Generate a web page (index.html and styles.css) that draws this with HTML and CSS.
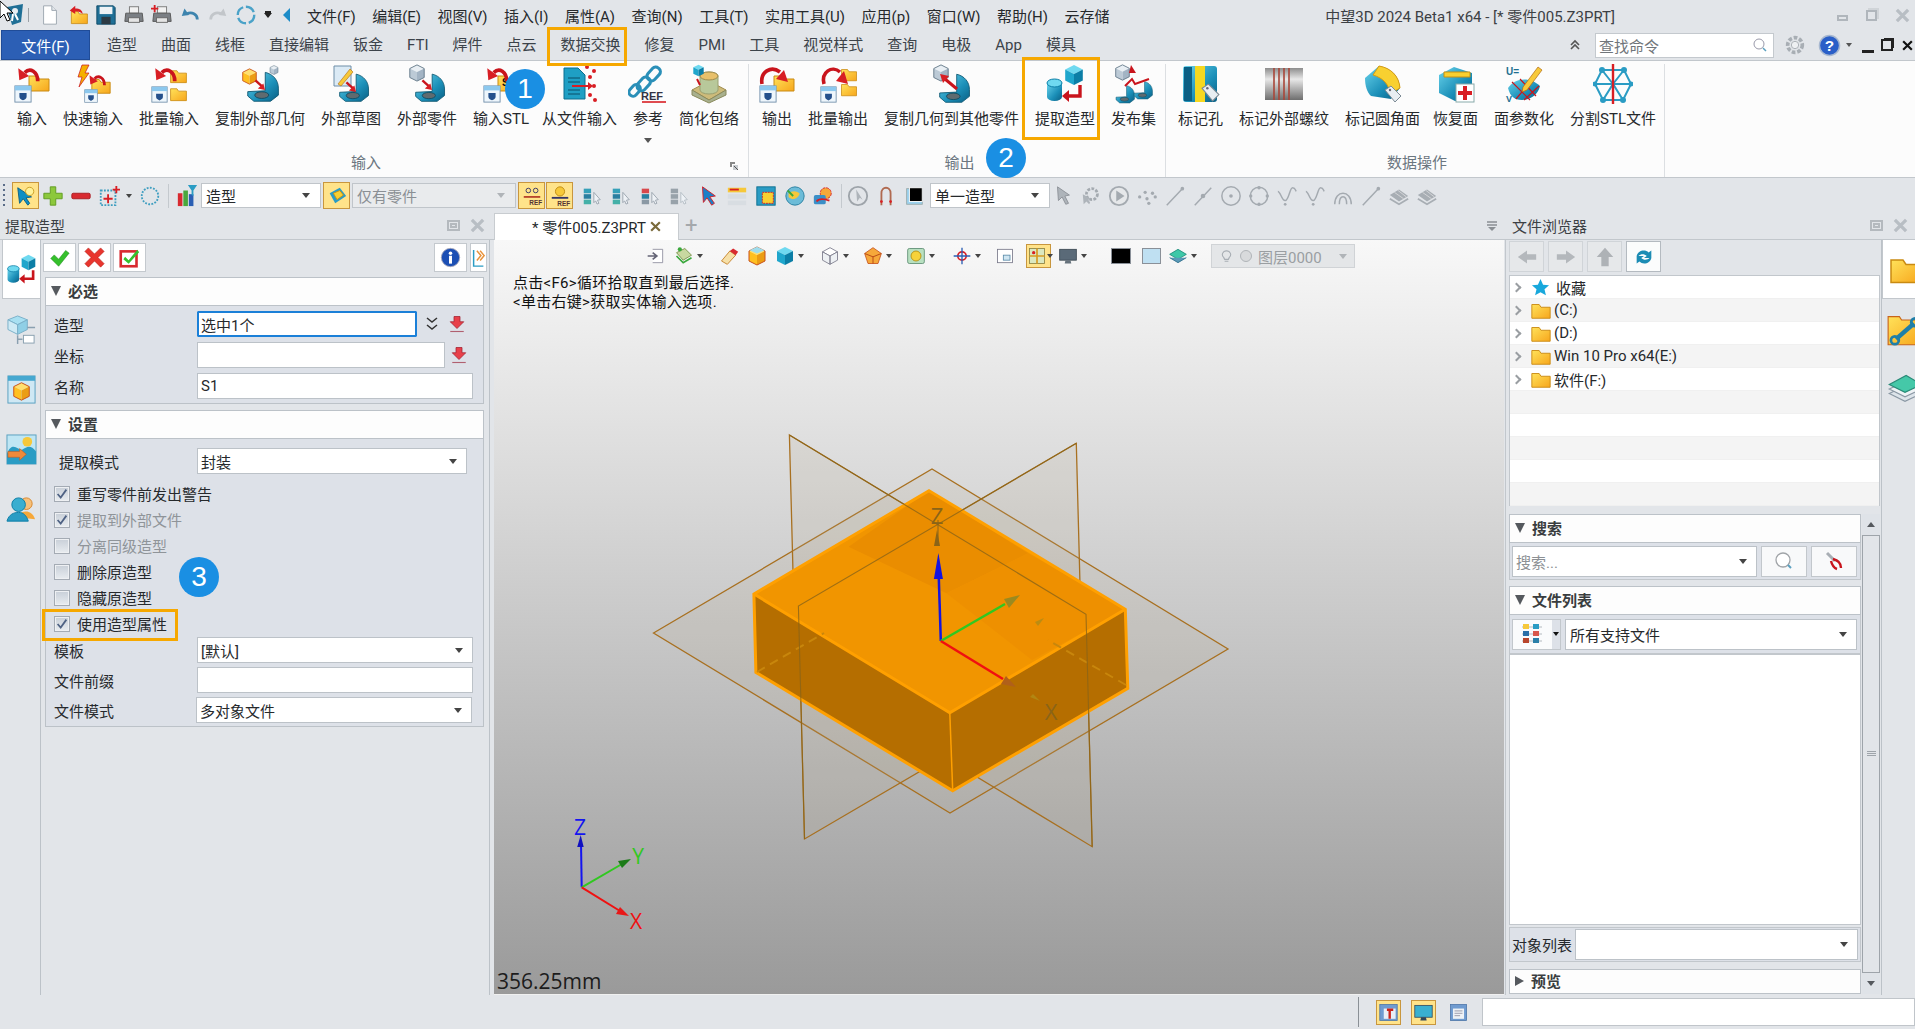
FILE: index.html
```html
<!DOCTYPE html>
<html lang="zh-CN">
<head>
  <meta charset="UTF-8" />
  <title>中望3D 2024 Beta1 x64</title>
  <link rel="stylesheet" href="styles.css">
</head>
<body>
<svg class="sprites" xmlns="http://www.w3.org/2000/svg">
  <defs>
    <linearGradient id="gFolder" x1="0" y1="0" x2="1" y2="1"><stop offset="0" stop-color="#ffe25a"/><stop offset="1" stop-color="#f7a61c"/></linearGradient>
    <linearGradient id="gTeal" x1="0" y1="0" x2="1" y2="1"><stop offset="0" stop-color="#6ad4ec"/><stop offset=".6" stop-color="#1b8fb8"/><stop offset="1" stop-color="#0a5f84"/></linearGradient>
    <linearGradient id="gMetal" x1="0" y1="0" x2="0" y2="1"><stop offset="0" stop-color="#8d8d8d"/><stop offset=".35" stop-color="#e8e8e8"/><stop offset="1" stop-color="#6e6e6e"/></linearGradient>

    <symbol id="i-folder" viewBox="0 0 24 24"><path d="M2 6h8l2 3h10v12H2z" fill="url(#gFolder)" stroke="#c98a12"/></symbol>
    <symbol id="i-win" viewBox="0 0 20 20"><rect x="1" y="1" width="18" height="18" fill="#eef6fc" stroke="#6f8ea8"/><rect x="1" y="1" width="18" height="5" fill="#8cc8ee"/><path d="M6 9h8v4c0 2-2 3-4 4-2-1-4-2-4-4z" fill="#24508c"/></symbol>
    <symbol id="i-curl" viewBox="0 0 24 24"><path d="M21 16C21 7 14 3 9 8" fill="none" stroke="#c9141c" stroke-width="3.4"/><path d="M3 4l1 11 9-4z" fill="#d81e24"/></symbol>
    <symbol id="i-part" viewBox="0 0 40 40"><path d="M22 5c9 2 15 9 15 18v8l-9 7H9l-7-6v-5l20-1z" fill="url(#gTeal)" stroke="#0b5570"/><ellipse cx="18" cy="31" rx="8" ry="3.8" fill="#5f6b70" stroke="#0b4a62"/></symbol>
    <symbol id="i-cubeg" viewBox="0 0 20 20"><path d="M10 1l8 4-8 4-8-4z" fill="#e9eff4"/><path d="M2 5l8 4v10l-8-4z" fill="#bccad6"/><path d="M18 5l-8 4v10l8-4z" fill="#a3b4c4"/><path d="M10 1l8 4v10l-8 4-8-4V5z" fill="none" stroke="#5f7484"/></symbol>
    <symbol id="i-cubet" viewBox="0 0 20 20"><path d="M10 1l8 4-8 4-8-4z" fill="#6fd9f0"/><path d="M2 5l8 4v10l-8-4z" fill="#1fa6cc"/><path d="M18 5l-8 4v10l8-4z" fill="#0b7ea6"/></symbol>
    <symbol id="i-cubey" viewBox="0 0 20 20"><path d="M10 1l8 4-8 4-8-4z" fill="#ffe070"/><path d="M2 5l8 4v10l-8-4z" fill="#ffc020"/><path d="M18 5l-8 4v10l8-4z" fill="#eb9d14"/><path d="M10 1l8 4v10l-8 4-8-4V5z" fill="none" stroke="#c8501a"/></symbol>
    <symbol id="i-redin" viewBox="0 0 20 20"><path d="M3 3l9 8" stroke="#c9141c" stroke-width="3"/><path d="M15 15l-9-2 7-6z" fill="#d81e24"/></symbol>
    <symbol id="i-tag" viewBox="0 0 20 20"><path d="M2 6l6-4 10 10-6 6z" fill="#e8eef2" stroke="#7c8a94"/><circle cx="7" cy="6" r="1.2" fill="#667"/></symbol>

    <symbol id="r-import" viewBox="0 0 40 40"><use href="#i-folder" x="15" y="6" width="24" height="24"/><use href="#i-win" x="2" y="21" width="18" height="18"/><use href="#i-curl" x="3" y="0" width="26" height="26"/></symbol>
    <symbol id="r-quick" viewBox="0 0 40 40"><path d="M9 1h7l-4 8h4L6 23l3-10H5z" fill="#f4b000" stroke="#c8141c" stroke-width=".7"/><use href="#i-folder" x="17" y="10" width="22" height="22"/><use href="#i-win" x="11" y="25" width="14" height="14"/><use href="#i-curl" x="14" y="8" width="20" height="20"/></symbol>
    <symbol id="r-batch" viewBox="0 0 40 40"><use href="#i-folder" x="20" y="2" width="19" height="19"/><use href="#i-folder" x="20" y="20" width="19" height="19"/><use href="#i-win" x="2" y="22" width="17" height="17"/><use href="#i-curl" x="3" y="0" width="26" height="26"/></symbol>
    <symbol id="r-copygeo" viewBox="0 0 40 40"><use href="#i-part" x="6" y="4" width="35" height="35"/><use href="#i-cubey" x="1" y="4" width="17" height="17"/><use href="#i-cubeg" x="29" y="1" width="10" height="10"/><use href="#i-redin" x="13" y="14" width="16" height="16"/></symbol>
    <symbol id="r-sketch" viewBox="0 0 40 40"><use href="#i-part" x="7" y="6" width="33" height="33"/><path d="M3 2h17v20H3z" fill="#dbeaf5" stroke="#6f8ea8"/><path d="M7 20L19 5l3 3L10 22z" fill="#f7c93a" stroke="#b06a10" stroke-width=".6"/><use href="#i-redin" x="13" y="16" width="16" height="16"/></symbol>
    <symbol id="r-extpart" viewBox="0 0 40 40"><use href="#i-part" x="7" y="6" width="33" height="33"/><use href="#i-cubeg" x="1" y="0" width="18" height="18"/><use href="#i-redin" x="13" y="14" width="16" height="16"/></symbol>
    <symbol id="r-stl" viewBox="0 0 40 40"><use href="#i-folder" x="15" y="6" width="24" height="24"/><text x="21" y="22" font-family="Liberation Sans" font-size="10" font-weight="700" fill="#111">ST</text><use href="#i-win" x="2" y="21" width="18" height="18"/><use href="#i-curl" x="3" y="0" width="26" height="26"/></symbol>
    <symbol id="r-fromfile" viewBox="0 0 40 40"><path d="M4 4h14l7 7v24H4z" fill="#1f9fc4" stroke="#0b6f90"/><path d="M8 14h12M8 18h12M8 26h12M8 30h12" stroke="#0b4f68"/><path d="M12 22h16" stroke="#d81e24" stroke-width="2"/><path d="M28 18l5 4-5 4z" fill="#d81e24"/><g fill="#d81e24"><circle cx="27" cy="3" r="2"/><circle cx="34" cy="7" r="2"/><circle cx="30" cy="13" r="2"/><circle cx="34" cy="22" r="2"/><circle cx="30" cy="31" r="2"/><circle cx="35" cy="36" r="2"/></g></symbol>
    <symbol id="r-ref" viewBox="0 0 40 40"><g fill="none" stroke="#2a8fb8" stroke-width="3"><rect x="21" y="2" width="9" height="15" rx="4" transform="rotate(42 25 10)"/><rect x="11" y="12" width="9" height="15" rx="4" transform="rotate(42 15 20)"/><rect x="3" y="20" width="8" height="13" rx="4" transform="rotate(42 7 26)"/></g><text x="13" y="36" font-family="Liberation Sans" font-size="11" font-weight="700" fill="#334">REF</text><path d="M14 38h24" stroke="#d81e24" stroke-width="1.6"/></symbol>
    <symbol id="r-wrap" viewBox="0 0 40 40"><path d="M3 26l17-9 17 9-17 10z" fill="#cdbb7a" stroke="#a08b4c"/><path d="M3 26v5l17 8 17-8v-5l-17 10z" fill="#a8b08e" stroke="#8a8a5c"/><path d="M11 12a9 4 0 0118 0v14a9 4 0 01-18 0z" fill="#b8c89a" stroke="#9aa070"/><ellipse cx="20" cy="12" rx="9" ry="4" fill="#e8c06a" stroke="#a08b4c"/><use href="#i-cubet" x="3" y="0" width="13" height="13"/><path d="M8 15l3 6" stroke="#c9141c" stroke-width="2"/></symbol>
    <symbol id="r-export" viewBox="0 0 40 40"><use href="#i-folder" x="15" y="6" width="24" height="24"/><use href="#i-win" x="2" y="21" width="18" height="18"/><path d="M5 20C3 8 14 1 23 8" fill="none" stroke="#c9141c" stroke-width="3.6"/><path d="M31 18l-12-3 8-9z" fill="#d81e24"/></symbol>
    <symbol id="r-batchout" viewBox="0 0 40 40"><use href="#i-folder" x="22" y="1" width="18" height="18"/><use href="#i-folder" x="22" y="16" width="18" height="18"/><use href="#i-win" x="2" y="22" width="17" height="17"/><path d="M6 20C3 8 14 1 22 8" fill="none" stroke="#c9141c" stroke-width="3.6"/><path d="M30 20l-12-3 8-10z" fill="#d81e24"/></symbol>
    <symbol id="r-copyout" viewBox="0 0 40 40"><use href="#i-part" x="6" y="6" width="34" height="34"/><use href="#i-cubeg" x="0" y="0" width="18" height="18"/><path d="M13 15l12 10" stroke="#c9141c" stroke-width="3"/><path d="M8 10l9 2-6 7z" fill="#d81e24"/></symbol>
    <symbol id="r-extract" viewBox="0 0 40 40"><use href="#i-cubet" x="18" y="0" width="22" height="22"/><path d="M2 19h15v14a7.500 4 0 01-15 0z" fill="url(#gTeal)"/><ellipse cx="9.500" cy="19" rx="7.500" ry="4" fill="#6fd9f0" stroke="#0b7ea6"/><path d="M35 21v11H22" fill="none" stroke="#c9141c" stroke-width="3.400"/><path d="M24 26v12l-7-6z" fill="#c9141c"/></symbol>
    <symbol id="r-publish" viewBox="0 0 40 40"><use href="#i-cubeg" x="0" y="0" width="17" height="17"/><use href="#i-part" x="1" y="19" width="21" height="21"/><use href="#i-part" x="19" y="15" width="21" height="21"/><path d="M11 22l7-7 3 5 14-5" fill="none" stroke="#c9141c" stroke-width="2"/><path d="M17 1l5 8h-7z" fill="#c9141c"/></symbol>
    <symbol id="r-hole" viewBox="0 0 40 40"><rect x="2" y="2" width="34" height="36" rx="3" fill="url(#gTeal)"/><rect x="3" y="3" width="8" height="34" fill="#0a5f84"/><rect x="14" y="2" width="10" height="36" fill="#f6d820"/><use href="#i-tag" x="19" y="18" width="21" height="21"/></symbol>
    <symbol id="r-thread" viewBox="0 0 40 40"><rect x="1" y="4" width="38" height="32" fill="url(#gMetal)"/><path d="M10 4v32M15 4v32M20 4v32M25 4v32" stroke="#a8463a" stroke-width="1.600"/></symbol>
    <symbol id="r-fillet" viewBox="0 0 40 40"><path d="M2 14L16 2c12 2 20 10 21 22l-9 11L8 32C4 28 2 22 2 14z" fill="url(#gTeal)"/><path d="M16 2c12 2 20 10 21 22l-10 6C26 20 20 14 10 11z" fill="#f8d030" stroke="#d89a10"/><use href="#i-tag" x="20" y="20" width="20" height="20"/></symbol>
    <symbol id="r-restore" viewBox="0 0 40 40"><path d="M3 11L18 3l18 6v28H19L3 29z" fill="url(#gTeal)"/><path d="M8 8h26v5H8z" fill="#f8d030" stroke="#c89010"/><rect x="20" y="20" width="18" height="18" fill="#fff" stroke="#8aa"/><path d="M27 22h4v5h5v4h-5v5h-4v-5h-5v-4h5z" fill="#d81e24"/></symbol>
    <symbol id="r-param" viewBox="0 0 40 40"><path d="M4 24C10 14 26 12 36 22c-2 9-10 14-18 14S6 32 4 24z" fill="url(#gTeal)"/><path d="M8 18l18 18M16 15l16 17M28 16L12 35M35 22L20 36" stroke="#c9141c" stroke-width="1.200"/><text x="2" y="11" font-family="Liberation Sans" font-size="10" font-weight="700" fill="#1f6f90">U=</text><text x="2" y="38" font-family="Liberation Sans" font-size="9" font-weight="700" fill="#1f6f90">V</text><path d="M19 23L34 3l4 3-15 20-5 2z" fill="#f7c93a" stroke="#b06a10" stroke-width=".7"/></symbol>
    <symbol id="r-split" viewBox="0 0 40 40"><g stroke="#2a9cc4" stroke-width="2" fill="none"><path d="M9 6h22l7 14-8 16H10L2 20zM9 6l11 14 11-14M2 20h36M10 36l10-16 10 16M20 6v30"/></g><g fill="#2a9cc4"><circle cx="9" cy="6" r="3"/><circle cx="31" cy="6" r="3"/><circle cx="2" cy="20" r="2.500"/><circle cx="38" cy="20" r="2.500"/><circle cx="10" cy="36" r="3"/><circle cx="30" cy="36" r="3"/></g><path d="M20 0v40" stroke="#d81e24" stroke-width="2.400"/></symbol>

    <symbol id="t-page" viewBox="0 0 24 24"><path d="M5 2h9l5 5v15H5z" fill="#fff" stroke="#9aa4ae"/><path d="M14 2v5h5" fill="#e4e8ec" stroke="#9aa4ae"/></symbol>
    <symbol id="t-open" viewBox="0 0 24 24"><use href="#i-folder" x="3" y="3" width="21" height="21"/><path d="M3 7l6-5v3c5 0 8 2 8 6-2-2-4-3-8-3v3z" fill="#d81e24"/></symbol>
    <symbol id="t-save" viewBox="0 0 24 24"><path d="M2 2h18l2 2v18H2z" fill="#1f6f96" stroke="#0f4a68"/><rect x="5" y="3" width="14" height="8" fill="#eef2f5"/><rect x="7" y="14" width="10" height="8" fill="#2c3a44"/></symbol>
    <symbol id="t-print" viewBox="0 0 24 24"><rect x="7" y="3" width="10" height="7" fill="#f2f2f2" stroke="#777"/><path d="M3 10h18l1 9H2z" fill="#7b7f84" stroke="#555"/><rect x="6" y="15" width="12" height="5" fill="#e4e4e4" stroke="#666"/></symbol>
    <symbol id="t-print2" viewBox="0 0 24 24"><use href="#t-print"/><path d="M3 1h2v3h3v2H5v3H3V6H0V4h3z" fill="#d81e24"/></symbol>
    <symbol id="t-undo" viewBox="0 0 24 24"><path d="M20 17c0-6-6-9-12-6" fill="none" stroke="#3d84ae" stroke-width="3"/><path d="M3 13l3-8 5 7z" fill="#3d84ae"/></symbol>
    <symbol id="t-redo" viewBox="0 0 24 24"><path d="M4 17c0-6 6-9 12-6" fill="none" stroke="#c2c6ca" stroke-width="3"/><path d="M21 13l-3-8-5 7z" fill="#c2c6ca"/></symbol>
    <symbol id="t-ring" viewBox="0 0 24 24"><circle cx="12" cy="12" r="9" fill="none" stroke="#4aa2c8" stroke-width="2.600" stroke-dasharray="11 3"/></symbol>
    <symbol id="t-select" viewBox="0 0 24 24"><path d="M3 3l2 17 4-5 5 7 2-2-4-6 6-1z" fill="#0f8fc4" stroke="#0b5f84"/><circle cx="16" cy="7" r="4.500" fill="#fff29a" stroke="#c89a20"/></symbol>
    <symbol id="t-plus" viewBox="0 0 24 24"><path d="M9 2h6v7h7v6h-7v7H9v-7H2V9h7z" fill="#8cc83c" stroke="#5f9a20"/></symbol>
    <symbol id="t-minus" viewBox="0 0 24 24"><rect x="2" y="9" width="20" height="6" rx="1.500" fill="#d82a30" stroke="#a81a20"/></symbol>
    <symbol id="t-dotbox" viewBox="0 0 24 24"><rect x="3" y="6" width="16" height="16" fill="none" stroke="#3f9ec0" stroke-width="2" stroke-dasharray="2 1.500"/><path d="M10 10h2v4h4v2h-4v4h-2v-4H6v-2h4zM19 1h2v3h3v2h-3v3h-2V6h-3V4h3z" fill="#d81e24"/></symbol>
    <symbol id="t-dotring" viewBox="0 0 24 24"><circle cx="12" cy="12" r="9" fill="none" stroke="#3f9ec0" stroke-width="2" stroke-dasharray="2 1.500"/></symbol>
    <symbol id="t-filter" viewBox="0 0 24 24"><rect x="2" y="9" width="5" height="14" fill="#d82a30"/><rect x="8" y="6" width="5" height="17" fill="#4aa83c"/><rect x="14" y="10" width="5" height="13" fill="#2a5fb4"/><path d="M13 0h10l-4 6v6l-2-1V6z" fill="#2a9cc4"/></symbol>
    <symbol id="t-cubetag" viewBox="0 0 24 24"><path d="M4 9l11-6 7 9-12 8z" fill="#2a9cc4"/><path d="M8 9l7-3 4 5-7 5z" fill="#f8d030" stroke="#c89010"/></symbol>
    <symbol id="t-ref1" viewBox="0 0 24 24"><circle cx="8" cy="6" r="2.500" fill="none" stroke="#336"/><circle cx="16" cy="6" r="2.500" fill="none" stroke="#336"/><path d="M3 13h18" stroke="#b8452c" stroke-width="2"/><text x="9" y="22" font-family="Liberation Sans" font-size="7" font-weight="700" fill="#533">REF</text></symbol>
    <symbol id="t-ref2" viewBox="0 0 24 24"><circle cx="12" cy="7" r="5" fill="#f6c83a" stroke="#c08a10"/><path d="M3 14h18" stroke="#336" stroke-width="2"/><text x="9" y="23" font-family="Liberation Sans" font-size="7" font-weight="700" fill="#533">REF</text></symbol>
    <symbol id="t-stack" viewBox="0 0 24 24"><rect x="3" y="4" width="8" height="5" fill="#35a0b8"/><rect x="3" y="10" width="8" height="5" fill="#2a7fa0"/><rect x="3" y="16" width="8" height="5" fill="#44b0a8"/><path d="M14 8l7 8-3 .5 1.500 3.500-2 .8-1.500-3.500-2 2z" fill="#eef2f6" stroke="#9aa4ae"/></symbol>
    <symbol id="t-stack2" viewBox="0 0 24 24"><rect x="3" y="4" width="8" height="5" fill="#d8484c"/><rect x="3" y="10" width="8" height="5" fill="#2a7fa0"/><rect x="3" y="16" width="8" height="5" fill="#8a98a4"/><path d="M14 8l7 8-3 .5 1.500 3.500-2 .8-1.500-3.500-2 2z" fill="#eef2f6" stroke="#9aa4ae"/></symbol>
    <symbol id="t-stack3" viewBox="0 0 24 24"><rect x="3" y="4" width="8" height="5" fill="#98a2aa"/><rect x="3" y="10" width="8" height="5" fill="#98a2aa"/><rect x="3" y="16" width="8" height="5" fill="#98a2aa"/><path d="M14 8l7 8-3 .5 1.500 3.500-2 .8-1.500-3.500-2 2z" fill="#eef2f6" stroke="#b4bcc4"/></symbol>
    <symbol id="t-arrow" viewBox="0 0 24 24"><path d="M6 2l1 17 4-5 5 8 3-2-5-7 6-1z" fill="#1a7fc8" stroke="#d81e24"/></symbol>
    <symbol id="t-list" viewBox="0 0 24 24"><rect x="2" y="3" width="20" height="5" fill="#f6c83a"/><rect x="2" y="10" width="20" height="5" fill="#d8dde2"/><rect x="2" y="17" width="20" height="5" fill="#d8dde2"/><path d="M4 5h10" stroke="#d81e24" stroke-width="2"/></symbol>
    <symbol id="t-box" viewBox="0 0 24 24"><rect x="2" y="2" width="20" height="20" fill="#2a9cc4" stroke="#0b6f90"/><rect x="8" y="8" width="12" height="12" fill="#f8d030" stroke="#d81e24" stroke-dasharray="2 1"/></symbol>
    <symbol id="t-globe" viewBox="0 0 24 24"><circle cx="12" cy="12" r="10" fill="#6cbcd8" stroke="#2a7fa0"/><path d="M5 9c4-3 8-3 12 0-1 5-7 9-12 4z" fill="#f6c83a"/><path d="M4 6l6 6" stroke="#3aa83c" stroke-width="2"/></symbol>
    <symbol id="t-gearb" viewBox="0 0 24 24"><circle cx="15" cy="9" r="6" fill="#f6a83a" stroke="#d81e24" stroke-dasharray="3 1"/><rect x="2" y="11" width="13" height="10" rx="2" fill="#3a8fc8"/><path d="M5 18c2-3 8-3 14-1" stroke="#d81e24" stroke-width="2" fill="none"/></symbol>
    <symbol id="t-gcirc" viewBox="0 0 24 24"><circle cx="12" cy="12" r="10" fill="none" stroke="#9ea4aa" stroke-width="2"/><path d="M10 5l1 13 3-4 3 2z" fill="#aeb4ba"/></symbol>
    <symbol id="t-magnet" viewBox="0 0 24 24"><path d="M7 22V9c0-8 10-8 10 0v13" fill="none" stroke="#b06a50" stroke-width="2"/><circle cx="7" cy="18" r="1.500" fill="#d81e24"/><circle cx="17" cy="18" r="1.500" fill="#d81e24"/></symbol>
    <symbol id="t-blacksq" viewBox="0 0 24 24"><rect x="4" y="4" width="17" height="17" fill="#9cd3f0" stroke="#9aa"/><rect x="7" y="3" width="14" height="15" fill="#000" stroke="#fff"/></symbol>
    <symbol id="d-cursor" viewBox="0 0 24 24"><path d="M6 2l1 15 4-4 4 8 3-1-4-8 5-1z" fill="#aeb4ba" stroke="#8d9298"/></symbol>
    <symbol id="d-gear" viewBox="0 0 24 24"><circle cx="13" cy="10" r="6" fill="none" stroke="#a4aab0" stroke-width="3" stroke-dasharray="3 1.500"/><path d="M3 10l1 11 3-3 3 3 1-2-2-3 3-1z" fill="#aeb4ba"/></symbol>
    <symbol id="d-play" viewBox="0 0 24 24"><circle cx="12" cy="12" r="10" fill="#e6e8ea" stroke="#a4aab0" stroke-width="2"/><path d="M9 6l9 6-9 6z" fill="#a4aab0"/></symbol>
    <symbol id="d-dots" viewBox="0 0 24 24"><g fill="#a4aab0"><circle cx="4" cy="13" r="1.800"/><circle cx="10" cy="8" r="1.800"/><circle cx="12" cy="15" r="1.800"/><circle cx="18" cy="9" r="1.800"/><circle cx="21" cy="13" r="1.800"/><circle cx="14" cy="20" r="1.800"/></g></symbol>
    <symbol id="d-line" viewBox="0 0 24 24"><path d="M3 22L21 3" stroke="#a4aab0" stroke-width="1.600"/><circle cx="20" cy="4" r="2" fill="#a4aab0"/></symbol>
    <symbol id="d-seg" viewBox="0 0 24 24"><path d="M3 22L21 3" stroke="#a4aab0" stroke-width="1.600"/><circle cx="12" cy="12" r="2.500" fill="#a4aab0"/></symbol>
    <symbol id="d-cdot" viewBox="0 0 24 24"><circle cx="12" cy="12" r="10" fill="none" stroke="#a4aab0" stroke-width="1.600"/><circle cx="12" cy="12" r="2" fill="#a4aab0"/></symbol>
    <symbol id="d-ring" viewBox="0 0 24 24"><circle cx="12" cy="12" r="9.500" fill="none" stroke="#a4aab0" stroke-width="1.600"/><g fill="#a4aab0"><circle cx="12" cy="3" r="1.800"/><circle cx="21" cy="12" r="1.800"/><circle cx="3" cy="12" r="1.800"/><circle cx="12" cy="21" r="1.800"/></g></symbol>
    <symbol id="d-spl" viewBox="0 0 24 24"><path d="M2 7c3 0 4 10 8 10s5-14 8-14 3 2 4 4" fill="none" stroke="#a4aab0" stroke-width="1.600"/><circle cx="10" cy="21" r="1.500" fill="#a4aab0"/></symbol>
    <symbol id="d-arc" viewBox="0 0 24 24"><path d="M3 21C3 5 21 5 21 21M8 21C8 10 16 10 16 21" fill="none" stroke="#a4aab0" stroke-width="1.600"/></symbol>
    <symbol id="d-layers" viewBox="0 0 24 24"><path d="M2 11l10-6 10 7-10 6z" fill="#a8aeb4"/><path d="M2 15l10 6 10-6" fill="none" stroke="#a8aeb4" stroke-width="2"/><path d="M7 8l10 7M11 6l9 7" stroke="#d6d8da"/></symbol>

    <symbol id="v-exit" viewBox="0 0 24 24"><path d="M8 4h12v16H8" fill="#fff" stroke="#889"/><path d="M2 12h10M8 8l5 4-5 4" fill="none" stroke="#667" stroke-width="2"/></symbol>
    <symbol id="v-green" viewBox="0 0 24 24"><path d="M3 8l10-5 8 8-10 6z" fill="#c8d8a0" stroke="#6f8a40"/><path d="M3 12l8 8 10-6" fill="none" stroke="#3aa83c" stroke-width="2"/><circle cx="7" cy="4" r="2.500" fill="#3aa83c"/></symbol>
    <symbol id="v-eraser" viewBox="0 0 24 24"><path d="M3 18l10-12 7 5-10 11z" fill="#f6e0a8" stroke="#c0781c"/><path d="M13 6l4-3 6 4-3 4z" fill="#d82a30"/></symbol>
    <symbol id="v-boxy" viewBox="0 0 24 24"><use href="#i-cubey"/><path d="M12 1l9 4-9 4-9-4z" fill="#9fdcec"/></symbol>
    <symbol id="v-boxt" viewBox="0 0 24 24"><use href="#i-cubet"/></symbol>
    <symbol id="v-boxw" viewBox="0 0 24 24"><path d="M12 2l9 5-9 5-9-5z" fill="#fff" stroke="#778"/><path d="M3 7l9 5v10l-9-5zM21 7l-9 5v10l9-5z" fill="#eef1f4" stroke="#778"/></symbol>
    <symbol id="v-orange" viewBox="0 0 24 24"><path d="M12 2l10 7-4 12H6L2 9z" fill="#f6a83a" stroke="#c8501a"/><path d="M2 9l10 4 10-4M12 13v8" stroke="#b03a10" fill="none"/></symbol>
    <symbol id="v-shade" viewBox="0 0 24 24"><rect x="2" y="3" width="20" height="18" rx="2" fill="#b8e0c0" stroke="#5a8a70"/><circle cx="12" cy="12" r="6" fill="#f6d23a" stroke="#b08a10"/></symbol>
    <symbol id="v-axis" viewBox="0 0 24 24"><circle cx="12" cy="12" r="5" fill="none" stroke="#d81e24" stroke-width="2"/><path d="M12 2v20M2 12h20" stroke="#2a5fb4" stroke-width="1.600"/></symbol>
    <symbol id="v-frame" viewBox="0 0 24 24"><rect x="3" y="4" width="18" height="16" fill="#fff" stroke="#778"/><rect x="10" y="11" width="8" height="6" fill="#cfe6f2" stroke="#5a8aa8"/></symbol>
    <symbol id="v-grid" viewBox="0 0 24 24"><rect x="3" y="3" width="18" height="18" fill="#dbe8c0" stroke="#8a8040"/><path d="M12 3v18M3 12h18" stroke="#d89a20" stroke-width="2"/><circle cx="8" cy="8" r="2" fill="#d81e24"/></symbol>
    <symbol id="v-screen" viewBox="0 0 24 24"><rect x="2" y="4" width="20" height="13" fill="#5a6a78" stroke="#3a4650"/><path d="M8 21h8l-1-4H9z" fill="#66727c"/></symbol>
    <symbol id="v-layer" viewBox="0 0 24 24"><path d="M2 10l10-6 10 6-10 6z" fill="#3ec8a8" stroke="#1a8a78"/><path d="M2 14l10 6 10-6" fill="#5a9ab8" stroke="#2a6a88"/></symbol>

    <symbol id="s-check" viewBox="0 0 16 16"><path d="M3 8l3.500 4L13 3" fill="none" stroke="#4f6284" stroke-width="2"/></symbol>
    <symbol id="s-ok" viewBox="0 0 24 24"><path d="M2 13l4-4 5 5L19 4l4 3-12 15z" fill="#35c02c" stroke="#1c8a18" stroke-width=".6"/></symbol>
    <symbol id="s-no" viewBox="0 0 24 24"><path d="M5 1l7 7 7-7 4 4-7 7 7 7-4 4-7-7-7 7-4-4 7-7-7-7z" fill="#e8352e" stroke="#b01a14" stroke-width=".6"/></symbol>
    <symbol id="s-okbox" viewBox="0 0 24 24"><rect x="2" y="5" width="18" height="17" fill="#fff" stroke="#d82a30" stroke-width="3"/><path d="M7 11l4 4L21 3l2 3-12 13-6-5z" fill="#35c02c"/></symbol>
    <symbol id="s-info" viewBox="0 0 24 24"><circle cx="12" cy="12" r="10.500" fill="#1c4fb4" stroke="#aab"/><circle cx="12" cy="7" r="2" fill="#fff"/><rect x="10.300" y="10" width="3.400" height="9" fill="#fff"/></symbol>
    <symbol id="s-more" viewBox="0 0 16 24"><path d="M2 2v20h12" fill="none" stroke="#2a9cc4" stroke-width="1.800"/><path d="M6 3l5 6-5 6M10 3l5 6-5 6" fill="none" stroke="#e8923a" stroke-width="1.800"/></symbol>
    <symbol id="s-pick" viewBox="0 0 24 24"><path d="M8 2h8v7h5L12 18 3 9h5z" fill="#e8404a" stroke="#a02030"/><path d="M3 22h18" stroke="#b06070" stroke-width="1.500"/></symbol>
    <symbol id="s-chev" viewBox="0 0 16 16"><path d="M3 2l5 4 5-4M3 9l5 4 5-4" fill="none" stroke="#333" stroke-width="1.500"/></symbol>

    <symbol id="p-tree" viewBox="0 0 32 32"><path d="M12 2l10 4-10 5-10-5z" fill="#a8e0f2" stroke="#7ab0c8"/><path d="M2 6l10 5v10L2 16z" fill="#cfeaf5" stroke="#7ab0c8"/><path d="M22 6l-10 5v10l10-5z" fill="#8fcfe6" stroke="#7ab0c8"/><path d="M22 14h8M12 22v9M12 26h5" stroke="#8aa0b0" stroke-width="1.500"/><rect x="18" y="22" width="11" height="8" fill="#fff" stroke="#8aa0b0"/></symbol>
    <symbol id="p-win" viewBox="0 0 32 32"><rect x="2" y="2" width="28" height="28" fill="#cfe8f4" stroke="#5aa0c0"/><rect x="2" y="2" width="28" height="5" fill="#46a8d0"/><use href="#i-cubey" x="6" y="8" width="20" height="20"/></symbol>
    <symbol id="p-pic" viewBox="0 0 32 32"><rect x="1" y="1" width="30" height="30" fill="#bfe6f4" stroke="#5aa0c0"/><circle cx="22" cy="8" r="5" fill="#f6c83a"/><path d="M1 20c6-14 12-2 16-4s8-6 14 2v13H1z" fill="#2a9cc4"/><path d="M2 18h12v-3l7 6-7 6v-3H2z" fill="#f08a3a" stroke="#c85010" stroke-width=".5"/></symbol>
    <symbol id="p-user" viewBox="0 0 32 32"><circle cx="21" cy="10" r="6" fill="#f6c07a" stroke="#d8862a"/><path d="M12 24c2-5 6-6 9-6s7 2 9 8z" fill="#f6a83a"/><circle cx="13" cy="11" r="7" fill="#3aaed0" stroke="#0b7ea6"/><path d="M1 28c2-7 7-9 12-9s8 3 10 9z" fill="#2a9cc4" stroke="#0b7ea6"/></symbol>
    <symbol id="p-tool" viewBox="0 0 32 32"><path d="M1 5h10l2 3h18v22H1z" fill="url(#gFolder)" stroke="#c8641a"/><path d="M8 25L24 11" stroke="#1f7fa8" stroke-width="4"/><circle cx="25" cy="10" r="3.500" fill="none" stroke="#1f7fa8" stroke-width="2.400"/><circle cx="7" cy="26" r="3.500" fill="none" stroke="#1f7fa8" stroke-width="2.400"/></symbol>
    <symbol id="p-sheets" viewBox="0 0 32 32"><path d="M2 20l14 7 15-7-14-7z" fill="#dde4ea" stroke="#8a98a4"/><path d="M2 16l14 7 15-7-14-7z" fill="#eef2f5" stroke="#8a98a4"/><path d="M2 12l14 7 15-7-14-8z" fill="#45c8a8" stroke="#2a8a78"/></symbol>
  </defs>
</svg>

<div class="app">
  <header class="titlebar">
    <svg class="app-logo" viewBox="0 0 26 26"><path d="M7 6l16-3-2 18-9 3z" fill="#1f6f96"/><circle cx="15" cy="10" r="3" fill="#e8eef2"/><path d="M13 13l-1 7M15 13l3 6" stroke="#fff" stroke-width="2"/><path d="M0 0v17l4-4 3 7 3-1-3-7h6z" fill="#fff" stroke="#000"/></svg>
    <span class="qa-sep"></span>
    <div class="quick">
      <svg class="tb-icon"><use href="#t-page"/></svg>
      <svg class="tb-icon"><use href="#t-open"/></svg>
      <svg class="tb-icon"><use href="#t-save"/></svg>
      <svg class="tb-icon"><use href="#t-print"/></svg>
      <svg class="tb-icon"><use href="#t-print2"/></svg>
      <svg class="tb-icon"><use href="#t-undo"/></svg>
      <svg class="tb-icon"><use href="#t-redo"/></svg>
      <svg class="tb-icon"><use href="#t-ring"/></svg>
      <span class="qa-more"></span>
      <span class="qa-back"></span>
    </div>
    <nav class="menu">
      <span>文件(F)</span><span>编辑(E)</span><span>视图(V)</span><span>插入(I)</span><span>属性(A)</span><span>查询(N)</span><span>工具(T)</span><span>实用工具(U)</span><span>应用(p)</span><span>窗口(W)</span><span>帮助(H)</span><span>云存储</span>
    </nav>
    <div class="doc-title">中望3D 2024 Beta1 x64 - [* 零件005.Z3PRT]</div>
    <div class="win-controls">
      <span class="wc wc-min"></span>
      <span class="wc wc-max"></span>
      <svg class="wc-close" viewBox="0 0 16 16"><path d="M2 2l12 12M14 2L2 14" stroke="#b8bec4" stroke-width="3.500"/></svg>
    </div>
  </header>

  <div class="tabbar">
    <div class="tab-file">文件(F)</div>
    <nav class="tabs">
      <span>造型</span><span>曲面</span><span>线框</span><span>直接编辑</span><span>钣金</span><span>FTI</span><span>焊件</span><span>点云</span><span>数据交换</span><span>修复</span><span>PMI</span><span>工具</span><span>视觉样式</span><span>查询</span><span>电极</span><span>App</span><span>模具</span>
    </nav>
    <div class="tab-tools">
      <svg class="collapse" viewBox="0 0 12 12"><path d="M2 6l4-4 4 4M2 10l4-4 4 4" fill="none" stroke="#555" stroke-width="1.600"/></svg>
      <div class="cmd-search"><span>查找命令</span><svg viewBox="0 0 16 16"><circle cx="7" cy="7" r="5" fill="#fff" stroke="#99a"/><path d="M11 11l3 3" stroke="#5aa0c0" stroke-width="1.500"/></svg></div>
      <svg class="gear" viewBox="0 0 24 24"><circle cx="12" cy="12" r="8" fill="none" stroke="#a8aeb4" stroke-width="4" stroke-dasharray="4 2"/><circle cx="12" cy="12" r="4" fill="#eef0f2" stroke="#a8aeb4"/></svg>
      <svg class="help" viewBox="0 0 24 24"><circle cx="12" cy="12" r="10.500" fill="#2a5fc8" stroke="#a8b8d0" stroke-width="1.500"/><text x="12" y="18" text-anchor="middle" font-family="Liberation Sans" font-size="16" font-weight="700" fill="#fff">?</text></svg>
      <span class="caret caret-help"></span>
      <span class="mdi mdi-min"></span>
      <span class="mdi mdi-max"></span>
      <svg class="mdi-close" viewBox="0 0 12 12"><path d="M2 2l8 8M10 2l-8 8" stroke="#111" stroke-width="2"/></svg>
    </div>
  </div>

  <section class="ribbon">
    <div class="rb-group rb-input">
      <div class="rb-items">
        <div class="rb-item"><svg class="rb-icon"><use href="#r-import"/></svg><span>输入</span></div>
        <div class="rb-item"><svg class="rb-icon"><use href="#r-quick"/></svg><span>快速输入</span></div>
        <div class="rb-item"><svg class="rb-icon"><use href="#r-batch"/></svg><span>批量输入</span></div>
        <div class="rb-item"><svg class="rb-icon"><use href="#r-copygeo"/></svg><span>复制外部几何</span></div>
        <div class="rb-item"><svg class="rb-icon"><use href="#r-sketch"/></svg><span>外部草图</span></div>
        <div class="rb-item"><svg class="rb-icon"><use href="#r-extpart"/></svg><span>外部零件</span></div>
        <div class="rb-item rb-tight"><svg class="rb-icon"><use href="#r-stl"/></svg><span>输入STL</span></div>
        <div class="rb-item"><svg class="rb-icon"><use href="#r-fromfile"/></svg><span>从文件输入</span></div>
        <div class="rb-item"><svg class="rb-icon"><use href="#r-ref"/></svg><span>参考</span><i class="caret"></i></div>
        <div class="rb-item"><svg class="rb-icon"><use href="#r-wrap"/></svg><span>简化包络</span></div>
      </div>
      <div class="rb-label">输入</div>
      <svg class="launcher" viewBox="0 0 10 10"><path d="M1 1h5v2H3v3H1z" fill="#888"/><path d="M4 4h5v5H4z" fill="#c8ccd0"/><path d="M5 5l4 4" stroke="#555"/></svg>
    </div>
    <div class="rb-group rb-output">
      <div class="rb-items">
        <div class="rb-item"><svg class="rb-icon"><use href="#r-export"/></svg><span>输出</span></div>
        <div class="rb-item"><svg class="rb-icon"><use href="#r-batchout"/></svg><span>批量输出</span></div>
        <div class="rb-item"><svg class="rb-icon"><use href="#r-copyout"/></svg><span>复制几何到其他零件</span></div>
        <div class="rb-item"><svg class="rb-icon"><use href="#r-extract"/></svg><span>提取造型</span></div>
        <div class="rb-item"><svg class="rb-icon"><use href="#r-publish"/></svg><span>发布集</span></div>
      </div>
      <div class="rb-label">输出</div>
    </div>
    <div class="rb-group rb-data">
      <div class="rb-items">
        <div class="rb-item"><svg class="rb-icon"><use href="#r-hole"/></svg><span>标记孔</span></div>
        <div class="rb-item"><svg class="rb-icon"><use href="#r-thread"/></svg><span>标记外部螺纹</span></div>
        <div class="rb-item rb-tight"><svg class="rb-icon"><use href="#r-fillet"/></svg><span>标记圆角面</span></div>
        <div class="rb-item"><svg class="rb-icon"><use href="#r-restore"/></svg><span>恢复面</span></div>
        <div class="rb-item"><svg class="rb-icon"><use href="#r-param"/></svg><span>面参数化</span></div>
        <div class="rb-item"><svg class="rb-icon"><use href="#r-split"/></svg><span>分割STL文件</span></div>
      </div>
      <div class="rb-label">数据操作</div>
    </div>
  </section>

  <div class="toolbar">
    <span class="grip"></span>
    <span class="tb-on"><svg class="tb-icon"><use href="#t-select"/></svg></span>
    <span class="slot"><svg class="tb-icon"><use href="#t-plus"/></svg></span>
    <span class="slot"><svg class="tb-icon"><use href="#t-minus"/></svg></span>
    <span class="slot slot-narrow"><svg class="tb-icon"><use href="#t-dotbox"/></svg></span>
    <span class="caret caret-tb"></span>
    <span class="slot"><svg class="tb-icon"><use href="#t-dotring"/></svg></span>
    <span class="tb-sep"></span>
    <span class="slot slot-narrow"><svg class="tb-icon"><use href="#t-filter"/></svg></span>
    <div class="combo combo-kind"><span>造型</span><i class="caret"></i></div>
    <span class="tb-on tb-on-gap"><svg class="tb-icon"><use href="#t-cubetag"/></svg></span>
    <div class="combo combo-off"><span>仅有零件</span><i class="caret"></i></div>
    <span class="tb-on tb-on-gap"><svg class="tb-icon"><use href="#t-ref1"/></svg></span>
    <span class="tb-on tb-on-tight"><svg class="tb-icon"><use href="#t-ref2"/></svg></span>
    <span class="slot slot-wide slot-first"><svg class="tb-icon"><use href="#t-stack"/></svg></span>
    <span class="slot slot-wide"><svg class="tb-icon"><use href="#t-stack"/></svg></span>
    <span class="slot slot-wide"><svg class="tb-icon"><use href="#t-stack2"/></svg></span>
    <span class="slot slot-wide"><svg class="tb-icon"><use href="#t-stack3"/></svg></span>
    <span class="slot slot-wide"><svg class="tb-icon"><use href="#t-arrow"/></svg></span>
    <span class="slot slot-wide"><svg class="tb-icon"><use href="#t-list"/></svg></span>
    <span class="slot slot-wide"><svg class="tb-icon"><use href="#t-box"/></svg></span>
    <span class="slot slot-wide"><svg class="tb-icon"><use href="#t-globe"/></svg></span>
    <span class="slot"><svg class="tb-icon"><use href="#t-gearb"/></svg></span>
    <span class="tb-sep tb-sep-b"></span>
    <span class="slot"><svg class="tb-icon"><use href="#t-gcirc"/></svg></span>
    <span class="slot"><svg class="tb-icon"><use href="#t-magnet"/></svg></span>
    <span class="slot"><svg class="tb-icon"><use href="#t-blacksq"/></svg></span>
    <div class="combo combo-single"><span>单一造型</span><i class="caret"></i></div>
    <span class="slot"><svg class="tb-icon"><use href="#d-cursor"/></svg></span>
    <span class="slot"><svg class="tb-icon"><use href="#d-gear"/></svg></span>
    <span class="slot"><svg class="tb-icon"><use href="#d-play"/></svg></span>
    <span class="slot"><svg class="tb-icon"><use href="#d-dots"/></svg></span>
    <span class="slot"><svg class="tb-icon"><use href="#d-line"/></svg></span>
    <span class="slot"><svg class="tb-icon"><use href="#d-seg"/></svg></span>
    <span class="slot"><svg class="tb-icon"><use href="#d-cdot"/></svg></span>
    <span class="slot"><svg class="tb-icon"><use href="#d-ring"/></svg></span>
    <span class="slot"><svg class="tb-icon"><use href="#d-spl"/></svg></span>
    <span class="slot"><svg class="tb-icon"><use href="#d-spl"/></svg></span>
    <span class="slot"><svg class="tb-icon"><use href="#d-arc"/></svg></span>
    <span class="slot"><svg class="tb-icon"><use href="#d-line"/></svg></span>
    <span class="slot"><svg class="tb-icon"><use href="#d-layers"/></svg></span>
    <span class="slot"><svg class="tb-icon"><use href="#d-layers"/></svg></span>
  </div>

  <div class="workspace">
    <aside class="left-panel">
      <div class="pane-head"><span>提取造型</span><span class="pane-btns"><i class="pane-pin"></i><svg class="pane-x" viewBox="0 0 16 16"><path d="M2 2l12 12M14 2L2 14" stroke="#b8bec4" stroke-width="3.500"/></svg></span></div>
      <div class="left-body">
        <div class="rail">
          <div class="rail-tab active"><svg class="rail-icon"><use href="#r-extract"/></svg></div>
          <div class="rail-tab"><svg class="rail-icon"><use href="#p-tree"/></svg></div>
          <div class="rail-tab"><svg class="rail-icon"><use href="#p-win"/></svg></div>
          <div class="rail-tab"><svg class="rail-icon"><use href="#p-pic"/></svg></div>
          <div class="rail-tab"><svg class="rail-icon"><use href="#p-user"/></svg></div>
        </div>
        <div class="form">
          <div class="actions">
            <button class="act"><svg class="act-icon"><use href="#s-ok"/></svg></button>
            <button class="act"><svg class="act-icon"><use href="#s-no"/></svg></button>
            <button class="act"><svg class="act-icon"><use href="#s-okbox"/></svg></button>
            <button class="act act-info"><svg class="act-icon"><use href="#s-info"/></svg></button>
            <button class="act act-more"><svg class="more-icon"><use href="#s-more"/></svg></button>
          </div>

          <div class="sec-head"><i class="tri"></i>必选</div>
          <div class="sec-body sec-required">
            <div class="field"><label>造型</label><div class="input input-focus">选中1个</div><svg class="chev"><use href="#s-chev"/></svg><svg class="pick"><use href="#s-pick"/></svg></div>
            <div class="field"><label>坐标</label><div class="input input-mid"></div><svg class="pick pick-b"><use href="#s-pick"/></svg></div>
            <div class="field"><label>名称</label><div class="input input-full">S1</div></div>
          </div>

          <div class="sec-head sec-head-gap"><i class="tri"></i>设置</div>
          <div class="sec-body sec-settings">
            <div class="field"><label class="label-in">提取模式</label><div class="input input-sel">封装<i class="caret"></i></div></div>
            <div class="checks">
              <div class="check"><span class="box"><svg><use href="#s-check"/></svg></span>重写零件前发出警告</div>
              <div class="check off"><span class="box"><svg><use href="#s-check"/></svg></span>提取到外部文件</div>
              <div class="check off"><span class="box"></span>分离同级造型</div>
              <div class="check"><span class="box"></span>删除原造型</div>
              <div class="check"><span class="box"></span>隐藏原造型</div>
              <div class="check"><span class="box"><svg><use href="#s-check"/></svg></span>使用造型属性</div>
            </div>
            <div class="field"><label>模板</label><div class="input input-full">[默认]<i class="caret"></i></div></div>
            <div class="field field-gap"><label>文件前缀</label><div class="input input-full"></div></div>
            <div class="field field-gap"><label>文件模式</label><div class="input input-full input-left">多对象文件<i class="caret"></i></div></div>
          </div>
        </div>
      </div>
    </aside>

    <main class="center">
      <div class="doc-tabs">
        <div class="doc-tab">* 零件005.Z3PRT<svg viewBox="0 0 12 12"><path d="M2 2l8 8M10 2l-8 8" stroke="#7a6a3a" stroke-width="2"/></svg></div>
        <span class="doc-plus">+</span>
        <svg class="doc-list" viewBox="0 0 12 12"><path d="M1 2h10M1 5h10" stroke="#8a8f94" stroke-width="1.500"/><path d="M2 7h8l-4 4z" fill="#8a8f94"/></svg>
      </div>
      <div class="viewport">
        <svg class="scene" viewBox="494 240 1010 754" xmlns="http://www.w3.org/2000/svg">
          <g fill="#b4a890" fill-opacity=".16" stroke="#a87020" stroke-width="1.300">
            <path d="M653.500 633L932 469l296 180-278 164z"/>
            <path d="M789.400 435L1086 614.300l6.200 232.400-296.700-179.400z"/>
            <path d="M1076.300 443.300L798.400 606l6.100 233 277.900-162.700z"/>
          </g>
          <path d="M929 490.700L1125.300 609.300 949.800 712.700 753.900 594z" fill="#f19500"/>
          <path d="M929 490.700L1028 553.300 946.500 593.300 848.600 546.700z" fill="#ea8d00"/>
          <path d="M1028 553.300L1125.300 609.300 1032 660 946.500 593.300z" fill="#ee9000"/>
          <path d="M753.900 594L949.800 712.700 952.700 790.700 755.900 672.300z" fill="#b56e00"/>
          <path d="M1125.300 609.300L949.800 712.700 952.700 790.700 1127.800 688.300z" fill="#b56e00"/>
          <path d="M929 490.700L1125.300 609.300 1127.800 688.300 952.700 790.700 755.900 672.300 753.900 594z" fill="none" stroke="#ffa000" stroke-width="3"/>
          <path d="M753.900 594L949.800 712.700 1125.300 609.300" fill="none" stroke="#ffa000" stroke-width="3"/>
          <path d="M949.800 712.700L952.700 790.700" stroke="#ffa000" stroke-width="1.500"/>
          <path d="M757 672L824 633M1126 685L1048 640" fill="none" stroke="#c8860c" stroke-width="2" stroke-dasharray="9 6"/>
          <g fill="none" stroke="#8a6418" stroke-width="1.100" stroke-opacity=".8">
            <path d="M789.400 435L1086 614.300l6.200 232.400"/>
            <path d="M1076.300 443.300L798.400 606l6.100 233"/>
          </g>
          <path d="M940.800 641L938.400 565" stroke="#1414e0" stroke-width="2.500"/>
          <path d="M938.400 553l-4.500 26h9z" fill="#1414e0"/>
          <path d="M938 520v22" stroke="#8a6418" stroke-width="1"/>
          <path d="M937 530l-3 16h6z" fill="#8a6418"/>
          <path d="M940.800 641L1005 604" stroke="#30c820" stroke-width="2.500"/>
          <path d="M1020 595l-16 4 5 9z" fill="#9a8a20"/>
          <path d="M1044 618l-9 4 3 4z" fill="#9a8a20" fill-opacity=".6"/>
          <path d="M940.800 641L1003 679" stroke="#f01010" stroke-width="2.500"/>
          <path d="M1016 687l-15-3 5-8z" fill="#b0601a"/>
          <path d="M1040 701l-10-4 3-3z" fill="#b0901a" fill-opacity=".7"/>
          <text class="axis-ghost" x="937" y="524" text-anchor="middle">Z</text>
          <text class="axis-ghost" x="1051" y="720" text-anchor="middle">X</text>

          <path d="M581.700 887.300L581 842" stroke="#1414f0" stroke-width="2"/>
          <path d="M580.700 835l-3.500 12h6.500z" fill="#1010c0"/>
          <path d="M581.700 887.300L622 864" stroke="#30c820" stroke-width="2"/>
          <path d="M631 859l-13 2 4 7z" fill="#1c7a18"/>
          <path d="M581.700 887.300L620 911" stroke="#f01010" stroke-width="2"/>
          <path d="M629 916l-13-2 4-7z" fill="#e81818"/>
          <text class="axis-z" x="580" y="835" text-anchor="middle">Z</text>
          <text class="axis-y" x="638" y="864" text-anchor="middle">Y</text>
          <text class="axis-x" x="636" y="929" text-anchor="middle">X</text>
        </svg>
        <div class="hint">点击&lt;F6&gt;循环拾取直到最后选择.<br>&lt;单击右键&gt;获取实体输入选项.</div>
        <div class="scale">356.25mm</div>
        <div class="view-tools">
          <span class="vt"><svg class="tb-icon"><use href="#v-exit"/></svg></span>
          <span class="vt vt-45"><svg class="tb-icon"><use href="#v-green"/></svg><i class="caret"></i></span>
          <span class="vt"><svg class="tb-icon"><use href="#v-eraser"/></svg></span>
          <span class="vt"><svg class="tb-icon"><use href="#v-boxy"/></svg></span>
          <span class="vt vt-45"><svg class="tb-icon"><use href="#v-boxt"/></svg><i class="caret"></i></span>
          <span class="vt vt-43"><svg class="tb-icon"><use href="#v-boxw"/></svg><i class="caret"></i></span>
          <span class="vt vt-43"><svg class="tb-icon"><use href="#v-orange"/></svg><i class="caret"></i></span>
          <span class="vt vt-46"><svg class="tb-icon"><use href="#v-shade"/></svg><i class="caret"></i></span>
          <span class="vt vt-43"><svg class="tb-icon"><use href="#v-axis"/></svg><i class="caret"></i></span>
          <span class="vt vt-31"><svg class="tb-icon"><use href="#v-frame"/></svg></span>
          <span class="vt vt-on"><svg class="tb-icon"><use href="#v-grid"/></svg><i class="caret"></i></span>
          <span class="vt vt-53"><svg class="tb-icon"><use href="#v-screen"/></svg><i class="caret"></i></span>
          <span class="vt-swatch black"></span>
          <span class="vt-swatch blue"></span>
          <span class="vt vt-43"><svg class="tb-icon"><use href="#v-layer"/></svg><i class="caret"></i></span>
          <div class="layer-box"><svg viewBox="0 0 16 16"><path d="M8 2a4 4 0 013 7l-1 2H6L5 9a4 4 0 013-7zM6 13h4" fill="none" stroke="#a8aeb4" stroke-width="1.200"/></svg><i class="lamp"></i><span>图层0000</span><i class="caret"></i></div>
        </div>
      </div>
    </main>

    <aside class="right-panel">
      <div class="pane-head pane-head-r"><span>文件浏览器</span><span class="pane-btns"><i class="pane-pin"></i><svg class="pane-x" viewBox="0 0 16 16"><path d="M2 2l12 12M14 2L2 14" stroke="#b8bec4" stroke-width="3.500"/></svg></span></div>
      <div class="right-body">
        <div class="browser">
          <div class="nav-btns">
            <button class="nav off"><svg viewBox="0 0 24 24"><path d="M2 12l10-7v4h10v6H12v4z" fill="#b4b8bc"/></svg></button>
            <button class="nav off"><svg viewBox="0 0 24 24"><path d="M22 12L12 5v4H2v6h10v4z" fill="#b4b8bc"/></svg></button>
            <button class="nav off"><svg viewBox="0 0 24 24"><path d="M12 2l9 10h-5v10H8V12H3z" fill="#aeb2b6"/></svg></button>
            <button class="nav"><svg viewBox="0 0 24 24"><path d="M4 11c1-6 9-8 13-4l3-2v8h-8l3-2c-3-3-7-2-9 0zM20 13c-1 6-9 8-13 4l-3 2v-8h8l-3 2c3 3 7 2 9 0z" fill="#1c8cb4"/></svg></button>
          </div>
          <div class="tree">
            <div class="tree-row"><i class="chevr"></i><svg class="star" viewBox="0 0 20 20"><path d="M10 1l2.700 6 6.300.6-4.800 4.200 1.500 6.400L10 14.900 4.300 18.200l1.500-6.400L1 7.600 7.300 7z" fill="#18a8dc"/></svg><span>收藏</span></div>
            <div class="tree-row"><i class="chevr"></i><svg class="tree-folder"><use href="#i-folder"/></svg><span>(C:)</span></div>
            <div class="tree-row"><i class="chevr"></i><svg class="tree-folder"><use href="#i-folder"/></svg><span>(D:)</span></div>
            <div class="tree-row"><i class="chevr"></i><svg class="tree-folder"><use href="#i-folder"/></svg><span>Win 10 Pro x64(E:)</span></div>
            <div class="tree-row"><i class="chevr"></i><svg class="tree-folder"><use href="#i-folder"/></svg><span>软件(F:)</span></div>
            <div class="tree-row"></div>
            <div class="tree-row"></div>
            <div class="tree-row"></div>
            <div class="tree-row"></div>
            <div class="tree-row"></div>
          </div>
          <div class="lower">
            <div class="accordion">
              <div class="sec-head"><i class="tri"></i>搜索</div>
              <div class="acc-row search-row">
                <div class="input search-input">搜索...<i class="caret"></i></div>
                <button class="tool-btn"><svg viewBox="0 0 20 20"><circle cx="9" cy="9" r="7" fill="#fff" stroke="#a0a4a8" stroke-width="1.300"/><path d="M14 14l3 3" stroke="#5aa0c0" stroke-width="2"/></svg></button>
                <button class="tool-btn"><svg viewBox="0 0 20 20"><path d="M3 2l8 8" stroke="#a8aeb4" stroke-width="3"/><path d="M9 8c4 1 8 4 8 9M7 10c1 4 3 7 6 8" fill="none" stroke="#c8141c" stroke-width="2.400"/></svg></button>
              </div>
              <div class="sec-head sec-head-gap"><i class="tri"></i>文件列表</div>
              <div class="acc-row type-row">
                <div class="view-mode"><svg viewBox="0 0 24 24"><path d="M2 5h20M2 12h20M2 19h20" stroke="#b4bac0"/><rect x="3" y="2" width="6" height="5" fill="#f6c83a"/><rect x="13" y="2" width="6" height="5" fill="#2a9cc4"/><rect x="3" y="9" width="6" height="5" fill="#2a6fa8"/><rect x="13" y="9" width="6" height="5" fill="#d8584c"/><rect x="3" y="16" width="6" height="5" fill="#b8452c"/><rect x="13" y="16" width="6" height="5" fill="#2a7fa8"/></svg><i class="caret"></i></div>
                <div class="input type-select">所有支持文件<i class="caret"></i></div>
              </div>
              <div class="file-list"></div>
              <div class="acc-row obj-row"><span>对象列表</span><div class="input obj-select"><i class="caret"></i></div></div>
              <div class="sec-head sec-head-gap preview-head"><i class="tri tri-closed"></i>预览</div>
            </div>
            <div class="scrollbar"><span class="sb-btn"><i class="sb-up"></i></span><span class="sb-thumb"><i></i></span><span class="sb-btn"><i class="sb-down"></i></span></div>
          </div>
        </div>
        <div class="rail rail-right">
          <div class="rail-tab active"><svg class="rail-icon-r"><use href="#i-folder"/></svg></div>
          <div class="rail-tab"><svg class="rail-icon-r"><use href="#p-tool"/></svg></div>
          <div class="rail-tab"><svg class="rail-icon-r"><use href="#p-sheets"/></svg></div>
        </div>
      </div>
    </aside>
  </div>

  <footer class="statusbar">
    <span class="st-sep"></span>
    <span class="st-btn on"><svg viewBox="0 0 24 24"><rect x="1" y="2" width="22" height="20" fill="#6f9bd0" stroke="#4a74a8"/><rect x="6" y="7" width="15" height="13" fill="#e8eef6"/><path d="M10 7h8v3h-3v10h-3V10h-2z" fill="#c8241c"/></svg></span>
    <span class="st-btn on"><svg viewBox="0 0 24 24"><rect x="1" y="3" width="22" height="15" fill="#3ab0d0" stroke="#33485a"/><path d="M8 22h8l-1-4H9z" fill="#33485a"/></svg></span>
    <span class="st-btn plain"><svg viewBox="0 0 24 24"><rect x="2" y="2" width="20" height="20" fill="#6f9bd0" stroke="#4a74a8"/><rect x="5" y="7" width="14" height="13" fill="#eef2f6"/><path d="M7 10h10M7 13h10M7 16h7" stroke="#889"/></svg></span>
    <div class="st-input"></div>
  </footer>

  <i class="mark mark-tab"></i>
  <i class="mark mark-cmd"></i>
  <i class="mark mark-opt"></i>
  <b class="badge badge-1">1</b>
  <b class="badge badge-2">2</b>
  <b class="badge badge-3">3</b>
</div>
</body>
</html>
```

FILE: styles.css
```css
* {
  margin: 0;
  padding: 0;
  box-sizing: border-box;
}
html, body {
  overflow: hidden;
}
body {
  font-family: Roboto, "Noto Sans CJK SC", sans-serif;
  font-size: 15px;
  color: #26292c;
  background: #e2e5e9;
}
button {
  font: inherit;
}
i {
  font-style: normal;
}
.sprites {
  position: absolute;
  width: 0;
  height: 0;
}
.app {
  position: relative;
  width: 1915px;
  height: 1029px;
  display: flex;
  flex-direction: column;
  overflow: hidden;
  background: #e2e5e9;
}
.caret {
  display: inline-block;
  width: 0;
  height: 0;
  border-left: 4px solid transparent;
  border-right: 4px solid transparent;
  border-top: 5px solid #444;
}

/* title bar */
.titlebar {
  height: 30px;
  display: flex;
  align-items: center;
}
.app-logo {
  width: 26px;
  height: 26px;
  margin-top: -3px;
}
.qa-sep {
  width: 1px;
  height: 14px;
  margin: 0 10px 0 2px;
  background: #9aa0a6;
}
.quick {
  display: flex;
  align-items: center;
  width: 268px;
}
.tb-icon {
  width: 22px;
  height: 22px;
  flex: none;
}
.quick .tb-icon {
  margin-right: 6px;
}
.qa-more {
  width: 0;
  height: 0;
  margin-left: 1px;
  border-left: 4px solid transparent;
  border-right: 4px solid transparent;
  border-top: 5px solid #222;
  box-shadow: 0 -3px 0 -1px #222;
}
.qa-back {
  width: 0;
  height: 0;
  margin-left: 11px;
  border-top: 7px solid transparent;
  border-bottom: 7px solid transparent;
  border-right: 7px solid #1c8cc8;
}
.menu {
  display: flex;
  gap: 16.500px;
  white-space: nowrap;
}
.doc-title {
  margin-left: auto;
  white-space: nowrap;
  color: #3c4044;
}
.win-controls {
  width: 85px;
  margin-left: 215px;
  display: flex;
  align-items: center;
  gap: 18px;
  padding-left: 7px;
}
.wc {
  display: block;
  width: 11px;
  height: 11px;
  border: 2px solid #b0b6bc;
}
.wc-min {
  height: 6px;
  margin-top: 5px;
}
.wc-max {
  box-shadow: 2px -2px 0 0 #d0d4d8;
}
.wc-close {
  width: 15px;
  height: 15px;
}

/* tabs */
.tabbar {
  height: 30px;
  display: flex;
  align-items: center;
}
.tab-file {
  width: 89px;
  height: 30px;
  margin-left: 1px;
  background: #2c5fb5;
  border: 1px solid #204c98;
  color: #fff;
  display: flex;
  align-items: center;
  justify-content: center;
}
.tabs {
  display: flex;
  align-items: baseline;
  margin-left: 5px;
  line-height: 20px;
  white-space: nowrap;
  color: #3c434a;
}
.tabs span {
  padding: 0 12px;
}
.tab-tools {
  margin-left: auto;
  display: flex;
  align-items: center;
  padding-right: 1px;
}
.collapse {
  width: 12px;
  height: 12px;
  margin-right: 14px;
}
.cmd-search {
  width: 179px;
  height: 25px;
  padding: 0 5px 0 3px;
  background: #fff;
  border: 1px solid #c4c9ce;
  color: #70757a;
  display: flex;
  align-items: center;
  justify-content: space-between;
}
.cmd-search svg {
  width: 16px;
  height: 16px;
}
.gear {
  width: 22px;
  height: 22px;
  margin: 0 12px 0 10px;
}
.help {
  width: 23px;
  height: 23px;
}
.caret-help {
  margin: 0 10px 0 5px;
  border-top-color: #555;
  border-width: 4px 3px 0;
}
.mdi {
  display: block;
  width: 12px;
}
.mdi-min {
  height: 3px;
  margin: 12px 7px 0 0;
  background: #222;
}
.mdi-max {
  height: 12px;
  border: 2px solid #222;
  margin-right: 8px;
  box-shadow: 2px -2px 0 -1px #222;
}
.mdi-close {
  width: 13px;
  height: 13px;
}

/* ribbon */
.ribbon {
  height: 118px;
  display: flex;
  background: #fcfcfc;
  border-top: 1px solid #c2c7cc;
  border-bottom: 1px solid #c2c7cc;
}
.rb-group {
  position: relative;
  height: 113px;
  margin-top: 3px;
  display: flex;
  flex-direction: column;
  border-right: 1px solid #dcdfe2;
}
.rb-input {
  width: 749px;
  padding-left: 9px;
}
.rb-output {
  width: 417px;
  padding-left: 5px;
}
.rb-data {
  width: 499px;
  padding-left: 4px;
}
.rb-items {
  display: flex;
  flex: 1;
}
.rb-item {
  display: flex;
  flex-direction: column;
  align-items: center;
  padding: 0 8px;
  white-space: nowrap;
}
.rb-tight {
  margin-right: -3px;
}
.rb-icon {
  width: 40px;
  height: 40px;
  margin: 0 -10px 3px;
}
.rb-item .caret {
  margin-top: 10px;
  border-top-color: #555;
}
.rb-label {
  height: 26px;
  text-align: center;
  color: #6b7680;
}
.rb-input .rb-label {
  padding-right: 25px;
}
.launcher {
  position: absolute;
  right: 9px;
  bottom: 6px;
  width: 10px;
  height: 10px;
}

/* main toolbar */
.toolbar {
  height: 35px;
  display: flex;
  align-items: center;
  padding-left: 3px;
}
.grip {
  width: 2px;
  height: 24px;
  margin-right: 7px;
  background: repeating-linear-gradient(#5a6c88 0 2px, transparent 2px 5px);
}
.tb-on {
  width: 27px;
  height: 27px;
  flex: none;
  background: #ffe38a;
  border: 1px solid #c8963e;
  display: flex;
  align-items: center;
  justify-content: center;
}
.tb-on-gap {
  margin-left: 2px;
}
.tb-on-tight {
  margin-left: 1px;
}
.slot {
  width: 28px;
  flex: none;
  display: flex;
  justify-content: center;
}
.slot-narrow {
  width: 27px;
}
.slot-wide {
  width: 29px;
}
.slot-first {
  margin-left: 4px;
}
.caret-tb {
  margin: 0 4px;
  border-width: 4px 3px 0;
}
.tb-sep {
  width: 1px;
  height: 24px;
  margin: 0 4px;
  background: #c4c9ce;
}
.tb-sep-b {
  margin: 0 2px 0 4px;
}
.combo {
  height: 25px;
  flex: none;
  padding: 0 10px 0 4px;
  background: #fff;
  border: 1px solid #c0c5ca;
  display: flex;
  align-items: center;
  justify-content: space-between;
}
.combo-kind {
  width: 120px;
  margin-left: 1px;
}
.combo-off {
  width: 164px;
  margin-left: 2px;
  background: #e9ebed;
  color: #8a8f94;
}
.combo-off .caret {
  border-top-color: #b0b4b8;
}
.combo-single {
  width: 120px;
  margin: 0 -1px 0 2px;
}

/* workspace */
.workspace {
  height: 782px;
  display: flex;
}
.pane-head {
  height: 27px;
  flex: none;
  padding: 0 7px 2px 5px;
  display: flex;
  align-items: center;
  justify-content: space-between;
  border-bottom: 1px solid #c2c7cc;
  color: #3c4044;
}
.pane-head-r {
  padding-left: 7px;
}
.pane-btns {
  display: flex;
  align-items: center;
  gap: 10px;
}
.pane-pin {
  width: 13px;
  height: 11px;
  border: 2px solid #b4b9be;
  box-shadow: inset 0 0 0 1px #e2e5e9, inset 0 0 0 3px #b4b9be;
}
.pane-x {
  width: 15px;
  height: 15px;
}
.left-panel {
  width: 492px;
  display: flex;
  flex-direction: column;
}
.left-body {
  flex: 1;
  display: flex;
}
.rail {
  width: 40px;
  flex: none;
  padding-left: 2px;
  display: flex;
  flex-direction: column;
}
.rail-tab {
  height: 60px;
  display: flex;
  align-items: center;
  justify-content: center;
}
.rail-tab.active {
  height: 59px;
  background: #fff;
  border: 1px solid #c2c7cc;
  border-right: none;
  border-top: none;
}
.rail-icon {
  width: 31px;
  height: 31px;
}
.form {
  width: 450px;
  padding: 3px 5px 0 4px;
  border-left: 1px solid #bcc2c8;
  border-right: 1px solid #bcc2c8;
}
.actions {
  height: 29px;
  margin: 0 -3px 5px -2px;
  display: flex;
  gap: 2px;
}
.act {
  width: 33px;
  height: 29px;
  background: #fff;
  border: 1px solid #c4c9ce;
  display: flex;
  align-items: center;
  justify-content: center;
}
.act-info {
  margin-left: auto;
  margin-right: 1px;
}
.act-more {
  width: 17px;
}
.act-icon {
  width: 21px;
  height: 21px;
}
.more-icon {
  width: 13px;
  height: 20px;
}
.sec-head {
  height: 29px;
  background: #fdfdfd;
  border: 1px solid #bcc2c8;
  display: flex;
  align-items: center;
  padding: 0 0 2px 5px;
  font-weight: 700;
  color: #3a3d40;
}
.sec-head-gap {
  margin-top: 6px;
}
.tri {
  width: 0;
  height: 0;
  margin-right: 7px;
  border-left: 5px solid transparent;
  border-right: 5px solid transparent;
  border-top: 10px solid #55595e;
}
.tri-closed {
  border-top: 5px solid transparent;
  border-bottom: 5px solid transparent;
  border-left: 9px solid #55595e;
  border-right: none;
}
.sec-body {
  background: #dde1e8;
  border: 1px solid #bcc2c8;
  border-top: none;
}
.sec-required {
  height: 98px;
  padding-top: 5px;
  display: flex;
  flex-direction: column;
  gap: 5px;
}
.sec-settings {
  height: 288px;
  padding-top: 9px;
}
.field {
  height: 26px;
  display: flex;
  align-items: center;
}
.field-gap {
  margin-top: 4px;
}
.field label {
  width: 151px;
  padding-left: 8px;
  flex: none;
}
.field .label-in {
  padding-left: 13px;
}
.input {
  height: 26px;
  padding: 0 9px 0 3px;
  background: #fff;
  border: 1px solid #bcc2c8;
  display: flex;
  align-items: center;
  justify-content: space-between;
  white-space: nowrap;
}
.input-focus {
  width: 220px;
  border: 1px solid #1b80d8;
  box-shadow: inset 0 0 0 1px #1b80d8;
  border-radius: 1px;
}
.input-mid {
  width: 248px;
}
.input-full {
  width: 276px;
}
.input-sel {
  width: 270px;
}
.input-left {
  margin-left: -1px;
}
.chev {
  width: 16px;
  height: 16px;
  margin: 0 7px;
}
.pick {
  width: 18px;
  height: 18px;
  margin-left: 1px;
}
.pick-b {
  margin-left: 5px;
}
.checks {
  height: 156px;
  margin-top: 7px;
  padding-left: 8px;
}
.check {
  height: 26px;
  display: flex;
  align-items: center;
  gap: 7px;
  padding-bottom: 2px;
}
.check.off {
  color: #8f9499;
}
.box {
  width: 16px;
  height: 16px;
  flex: none;
  margin-top: 2px;
  background: linear-gradient(#c8cfd8, #e8ecf0);
  border: 1px solid #a4abb4;
  box-shadow: inset 0 0 0 1px #eef0f3;
}
.box svg {
  display: block;
  width: 14px;
  height: 14px;
}

/* document area */
.center {
  width: 1013px;
  display: flex;
  flex-direction: column;
}
.doc-tabs {
  height: 27px;
  flex: none;
  display: flex;
  align-items: center;
  padding-left: 2px;
  border-bottom: 1px solid #c2c7cc;
}
.doc-tab {
  width: 185px;
  height: 27px;
  background: #fff;
  border: 1px solid #c8ccd0;
  border-bottom: none;
  display: flex;
  align-items: center;
  padding-left: 37px;
  gap: 3px;
  white-space: nowrap;
}
.doc-tab svg {
  width: 13px;
  height: 13px;
}
.doc-plus {
  margin-left: 6px;
  font-size: 22px;
  line-height: 1;
  color: #a4a8ac;
}
.doc-list {
  width: 12px;
  height: 12px;
  margin-left: auto;
  margin-right: 7px;
}
.viewport {
  position: relative;
  height: 755px;
  margin: 0 1px 0 2px;
  background: linear-gradient(#f8f8f8, #9a9a9a);
  border-bottom: 1px solid #f0f0f0;
}
.scene {
  position: absolute;
  left: 0;
  top: 0;
  width: 1010px;
  height: 754px;
}
.axis-ghost {
  font: 22px "Open Sans", sans-serif;
  fill: #8a6418;
}
.axis-z, .axis-y, .axis-x {
  font: 21px "Open Sans", sans-serif;
}
.axis-z {
  fill: #1414f0;
}
.axis-y {
  fill: #30c820;
}
.axis-x {
  fill: #f01010;
}
.hint {
  position: absolute;
  left: 19px;
  top: 34px;
  line-height: 19px;
  font-size: 15px;
  letter-spacing: .3px;
  color: #111;
}
.scale {
  position: absolute;
  left: 3px;
  bottom: 0;
  font-family: "Open Sans", sans-serif;
  font-size: 21px;
  line-height: 26px;
  color: #1c1c1c;
}
.view-tools {
  position: absolute;
  left: 152px;
  top: 3px;
  height: 26px;
  display: flex;
  align-items: center;
}
.view-tools .tb-icon {
  width: 20px;
  height: 20px;
}
.vt {
  width: 28px;
  flex: none;
  display: flex;
  align-items: center;
  gap: 3px;
}
.vt .caret {
  border-width: 4px 3px 0;
}
.vt-31 {
  width: 31px;
}
.vt-43 {
  width: 43px;
}
.vt-45 {
  width: 45px;
}
.vt-46 {
  width: 46px;
}
.vt-53 {
  width: 53px;
}
.vt-on {
  height: 24px;
  width: 25px;
  margin-right: 7px;
  background: #ffe38a;
  border: 1px solid #c8963e;
  gap: 0;
}
.vt-swatch {
  width: 20px;
  height: 16px;
  flex: none;
  margin-right: 11px;
  border: 1px solid #8a9098;
}
.vt-swatch.black {
  background: #000;
}
.vt-swatch.blue {
  width: 19px;
  margin-right: 7px;
  background: #bfe0f2;
}
.layer-box {
  width: 144px;
  height: 24px;
  flex: none;
  padding: 0 7px;
  background: #e4e6e8;
  border: 1px solid #d0d3d6;
  display: flex;
  align-items: center;
  gap: 6px;
  color: #9a9ea2;
}
.layer-box svg {
  width: 15px;
  height: 15px;
}
.lamp {
  width: 12px;
  height: 12px;
  border-radius: 50%;
  border: 1px solid #b0b4b8;
  background: #d8dadc;
}
.layer-box span {
  flex: 1;
}
.layer-box .caret {
  border-top-color: #b0b4b8;
}

/* file browser */
.right-panel {
  width: 410px;
  display: flex;
  flex-direction: column;
}
.right-body {
  flex: 1;
  display: flex;
}
.browser {
  width: 377px;
  padding: 1px 1px 0 3px;
  border-left: 1px solid #c2c7cc;
  border-right: 1px solid #bcc2c8;
}
.nav-btns {
  display: flex;
  gap: 4px;
  height: 31px;
  margin-bottom: 3px;
}
.nav {
  width: 35px;
  height: 31px;
  background: #fbfcfc;
  border: 1px solid #b4bac0;
  display: flex;
  align-items: center;
  justify-content: center;
}
.nav.off {
  background: #e6e8ea;
  border-color: #d0d4d8;
}
.nav svg {
  width: 22px;
  height: 22px;
}
.tree {
  height: 231px;
  border: 1px solid #c2c7cc;
  background: #fff;
}
.tree-row {
  height: 23px;
  display: flex;
  align-items: center;
  border-bottom: 1px solid #f0f0f0;
  white-space: nowrap;
}
.tree-row:nth-child(even) {
  background: #f4f4f4;
}
.chevr {
  width: 7px;
  height: 7px;
  margin: 0 6px 0 3px;
  border-top: 2px solid #9a9ea2;
  border-right: 2px solid #9a9ea2;
  transform: rotate(45deg);
}
.star {
  width: 19px;
  height: 19px;
  margin: 0 6px 0 5px;
}
.tree-folder {
  width: 22px;
  height: 22px;
  margin: 0 2px 0 4px;
}
.lower {
  height: 480px;
  margin-top: 8px;
  display: flex;
}
.accordion {
  width: 352px;
  display: flex;
  flex-direction: column;
}
.acc-row {
  flex: none;
  display: flex;
  align-items: center;
  background: #dde1e8;
  border: 1px solid #c2c7cc;
  border-top: none;
}
.search-row {
  height: 37px;
  padding-left: 2px;
  gap: 4px;
}
.search-input {
  width: 245px;
  height: 31px;
  color: #8c9094;
}
.tool-btn {
  width: 46px;
  height: 31px;
  background: #f8f9fa;
  border: 1px solid #c2c7cc;
  display: flex;
  align-items: center;
  justify-content: center;
}
.tool-btn svg {
  width: 20px;
  height: 20px;
}
.type-row {
  height: 39px;
  padding-left: 2px;
  gap: 4px;
}
.view-mode {
  width: 49px;
  height: 31px;
  background: linear-gradient(90deg, #fafbfc 39px, #dde1e8 39px);
  border: 1px solid #c2c7cc;
  display: flex;
  align-items: center;
  padding-left: 7px;
  gap: 9px;
}
.view-mode svg {
  width: 24px;
  height: 24px;
  flex: none;
}
.view-mode .caret {
  border-top-color: #111;
  border-width: 4px 3px 0;
}
.type-select {
  width: 292px;
  height: 31px;
  padding-left: 4px;
}
.file-list {
  height: 271px;
  background: #fff;
  border: 1px solid #c2c7cc;
}
.obj-row {
  height: 35px;
  margin-top: 2px;
  border-top: 1px solid #c2c7cc;
  padding-left: 2px;
  gap: 3px;
  white-space: nowrap;
}
.obj-select {
  width: 283px;
  height: 31px;
}
.obj-select .caret {
  margin-left: auto;
}
.preview-head {
  height: 25px;
  margin-top: 7px;
}
.scrollbar {
  width: 18px;
  margin-left: 1px;
  display: flex;
  flex-direction: column;
  background: #dfe3e8;
}
.sb-btn {
  height: 21px;
  flex: none;
  display: flex;
  align-items: center;
  justify-content: center;
}
.sb-up, .sb-down {
  width: 0;
  height: 0;
  border-left: 4px solid transparent;
  border-right: 4px solid transparent;
}
.sb-up {
  border-bottom: 5px solid #55595e;
}
.sb-down {
  border-top: 5px solid #55595e;
}
.sb-thumb {
  flex: 1;
  background: #e2e5e9;
  border: 1px solid #9ea4aa;
  display: flex;
  align-items: center;
  justify-content: center;
}
.sb-thumb i {
  width: 9px;
  height: 6px;
  background: repeating-linear-gradient(#9ea4aa 0 1px, transparent 1px 2px);
}
.rail-right {
  width: 33px;
  padding-left: 0;
  overflow: hidden;
}
.rail-right .rail-tab {
  justify-content: flex-start;
  padding-left: 5px;
}
.rail-icon-r {
  width: 36px;
  height: 36px;
  flex: none;
}

/* status bar */
.statusbar {
  height: 34px;
  display: flex;
  align-items: center;
  padding-left: 1358px;
  gap: 10px;
}
.st-sep {
  width: 1px;
  height: 30px;
  margin-right: 7px;
  background: #8a9096;
}
.st-btn {
  width: 25px;
  height: 25px;
  display: flex;
  align-items: center;
  justify-content: center;
}
.st-btn.on {
  background: #ffe38a;
  border: 1px solid #c8963e;
}
.st-btn svg {
  width: 19px;
  height: 19px;
}
.st-input {
  width: 436px;
  height: 28px;
  margin-left: 2px;
  background: #fff;
  border: 1px solid #c0c5ca;
}

/* annotation overlays */
.mark {
  position: absolute;
  border: 3px solid #f6a800;
  pointer-events: none;
}
.mark-tab {
  left: 547px;
  top: 27px;
  width: 80px;
  height: 39px;
}
.mark-cmd {
  left: 1022px;
  top: 57px;
  width: 78px;
  height: 83px;
}
.mark-opt {
  left: 42px;
  top: 609px;
  width: 136px;
  height: 32px;
}
.badge {
  position: absolute;
  width: 40px;
  height: 40px;
  border-radius: 50%;
  background: #1a8fe3;
  color: #fff;
  font: 400 28px/40px "Liberation Sans", sans-serif;
  text-align: center;
}
.badge-1 {
  left: 505px;
  top: 69px;
}
.badge-2 {
  left: 986px;
  top: 138px;
}
.badge-3 {
  left: 179px;
  top: 557px;
}
```
